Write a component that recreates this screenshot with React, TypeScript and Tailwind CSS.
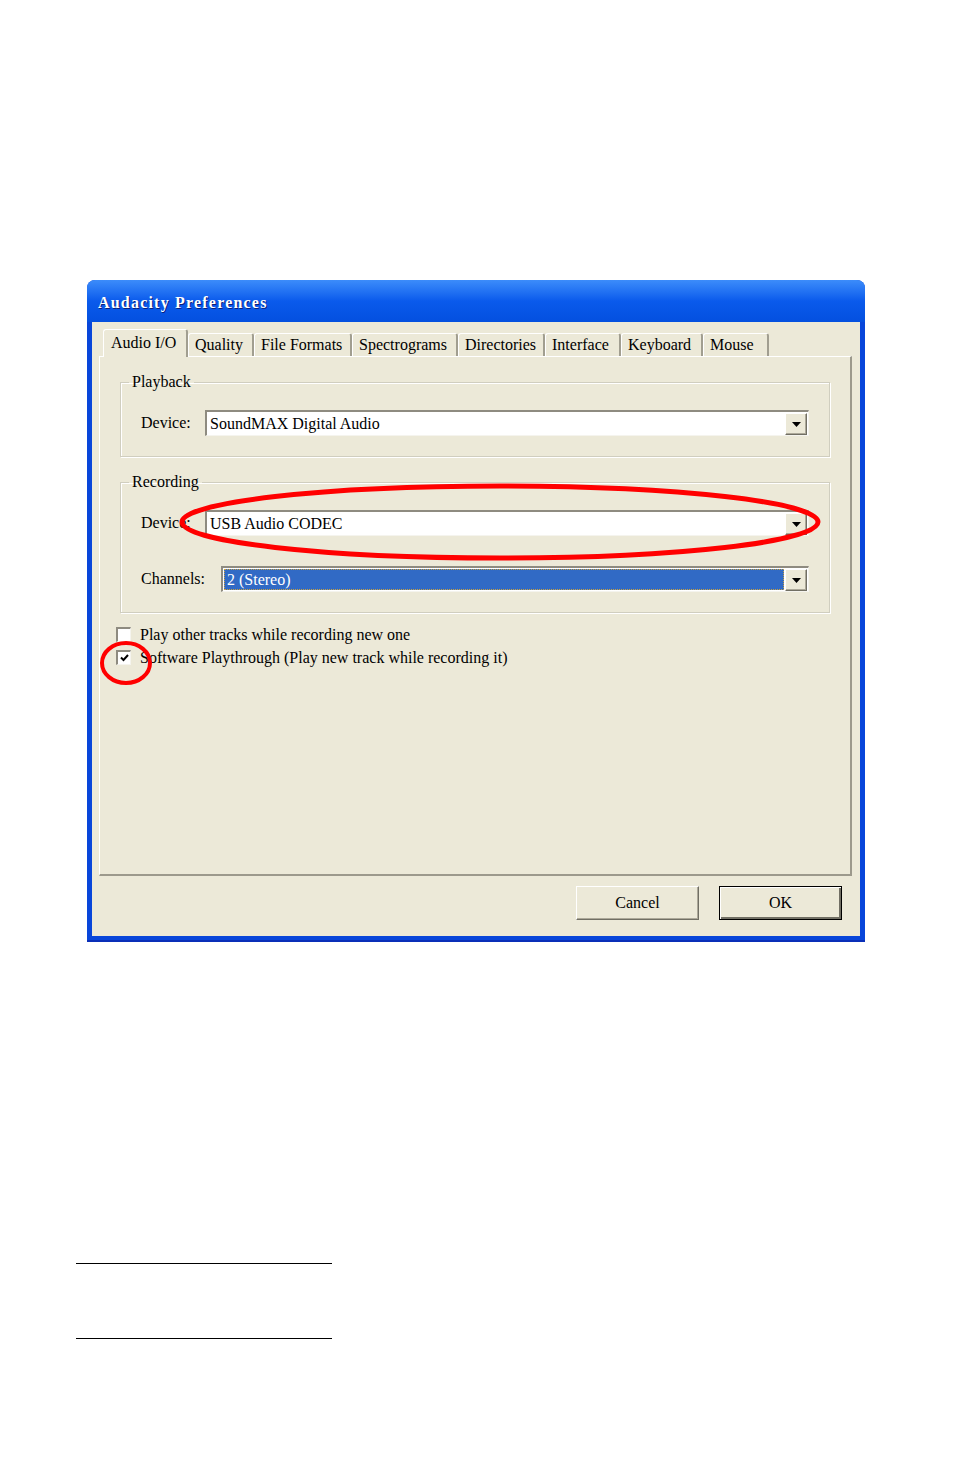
import React from 'react';

const tabs = [
  { label: 'Audio I/O', w: 'w-[85px]' },
  { label: 'Quality', w: 'w-[66px]' },
  { label: 'File Formats', w: 'w-[98px]' },
  { label: 'Spectrograms', w: 'w-[106px]' },
  { label: 'Directories', w: 'w-[87px]' },
  { label: 'Interface', w: 'w-[76px]' },
  { label: 'Keyboard', w: 'w-[82px]' },
  { label: 'Mouse', w: 'w-[66px]' },
];

const DropButton = () => (
  <div className="w-[22px] h-[22px] bg-[#ECE9D8] border border-t-white border-l-white border-r-[#716F64] border-b-[#716F64] shadow-[inset_-1px_-1px_0_#ACA899] flex items-center justify-center">
    <svg width="9" height="5" viewBox="0 0 9 5">
      <path d="M0 0h9L4.5 5z" fill="#000" />
    </svg>
  </div>
);

const Combo = ({ value, selected }: { value: string; selected?: boolean }) => (
  <div className="flex-1 h-[26px] flex border-t-2 border-l-2 border-t-[#8E8B80] border-l-[#8E8B80] border-b border-r border-b-[#F5F4EE] border-r-[#F5F4EE] bg-white">
    <div className="flex-1 flex items-center px-[1px] py-[1px]">
      {selected ? (
        <div className="w-full h-full bg-[#316AC5] text-white flex items-center pl-[3px] outline-1 outline-dotted outline-[#C8A040] -outline-offset-1">
          {value}
        </div>
      ) : (
        <span className="pl-[2px]">{value}</span>
      )}
    </div>
    <div className="py-[1px] pr-[1px]">
      <DropButton />
    </div>
  </div>
);

const Group = ({ title, children }: { title: string; children: React.ReactNode }) => (
  <fieldset className="border border-[#D0CEBF] shadow-[inset_1px_1px_0_#fff,1px_1px_0_#fff] mx-[20px] px-0">
    <legend className="ml-[8px] px-[3px] leading-[18px]">{title}</legend>
    <div className="px-[20px]">{children}</div>
  </fieldset>
);

const Check = ({ checked, label }: { checked?: boolean; label: string }) => (
  <div className="flex items-center h-[23px] pl-[17px]">
    <div className="w-[15px] h-[15px] bg-white border-t-2 border-l-2 border-t-[#8E8B80] border-l-[#8E8B80] border-b border-r border-b-[#F5F4EE] border-r-[#F5F4EE] flex items-center justify-center">
      {checked && (
        <svg width="9" height="8" viewBox="0 0 9 8">
          <path d="M1 3.5l2.5 2.5L8 1" stroke="#000" strokeWidth="2" fill="none" />
        </svg>
      )}
    </div>
    <span className="ml-[9px]">{label}</span>
  </div>
);

export default function App() {
  return (
    <div className="relative w-[954px] h-[1474px] bg-white text-black text-[16px] font-['Liberation_Serif',serif] overflow-hidden">
      <div className="pt-[280px] pl-[87px]">
        <div className="w-[778px] rounded-t-[8px] bg-[#0846DA] px-[5px] pb-[6px] shadow-[inset_0_-2px_0_#0A2FB8]">
          <div className="h-[42px] -mx-[5px] rounded-t-[8px] bg-gradient-to-b from-[#3C8CFA] via-[#0A5AEC] to-[#0450DF] flex items-center pl-[11px] pt-[3px]">
            <span className="text-white font-bold tracking-[1.2px] [text-shadow:1px_1px_0_#0B1F7A]">Audacity Preferences</span>
          </div>
          <div className="bg-[#ECE9D8] h-[614px] flex flex-col pt-[7px] pl-[7px] pr-[8px]">
            <div className="flex items-end h-[27px] pl-[4px]">
              {tabs.map((t, i) =>
                i === 0 ? (
                  <div
                    key={t.label}
                    className={`${t.w} h-[28px] -mb-px relative z-10 bg-[#ECE9D8] border-t border-l border-t-white border-l-white border-r-2 border-r-[#A19E90] rounded-t-[3px] pl-[7px] pt-[2px] leading-[22px]`}
                  >
                    {t.label}
                  </div>
                ) : (
                  <div
                    key={t.label}
                    className={`${t.w} h-[23px] border-t border-l border-t-white border-l-white border-r-2 border-r-[#A19E90] rounded-t-[3px] pl-[6px] leading-[22px]`}
                  >
                    {t.label}
                  </div>
                )
              )}
            </div>
            <div className="h-[520px] border-t border-l border-t-white border-l-white border-r-2 border-b-2 border-r-[#9C998C] border-b-[#9C998C] pt-[16px]">
              <Group title="Playback">
                <div className="flex items-center pt-[19px] pb-[20px]">
                  <span className="w-[64px]">Device:</span>
                  <Combo value="SoundMAX Digital Audio" />
                </div>
              </Group>
              <div className="h-[16px]" />
              <Group title="Recording">
                <div className="flex items-center pt-[19px]">
                  <span className="w-[64px]">Device:</span>
                  <Combo value="USB Audio CODEC" />
                </div>
                <div className="flex items-center pt-[30px] pb-[20px]">
                  <span className="w-[80px]">Channels:</span>
                  <Combo value="2 (Stereo)" selected />
                </div>
              </Group>
              <div className="pt-[10px] -ml-[1px]">
                <Check label="Play other tracks while recording new one" />
                <Check checked label="Software Playthrough (Play new track while recording it)" />
              </div>
            </div>
            <div className="flex justify-end gap-[20px] pt-[10px] pr-[10px]">
              <button className="w-[123px] h-[34px] bg-[#ECE9D8] border border-t-white border-l-white border-r-[#716F64] border-b-[#716F64] shadow-[inset_-1px_-1px_0_#ACA899]">
                Cancel
              </button>
              <button className="w-[123px] h-[34px] bg-[#ECE9D8] border border-black shadow-[inset_1px_1px_0_#fff,inset_-2px_-2px_0_#716F64]">
                OK
              </button>
            </div>
          </div>
        </div>
      </div>
      <div className="ml-[76px] mt-[321px] w-[256px] h-px bg-black" />
      <div className="ml-[76px] mt-[74px] w-[256px] h-px bg-black" />
      <svg className="absolute inset-0 pointer-events-none" width="954" height="1474">
        <ellipse cx="500" cy="522" rx="318" ry="36" fill="none" stroke="#FF0000" strokeWidth="5" />
        <ellipse cx="126" cy="663" rx="24" ry="20" fill="none" stroke="#FF0000" strokeWidth="4" />
      </svg>
    </div>
  );
}
